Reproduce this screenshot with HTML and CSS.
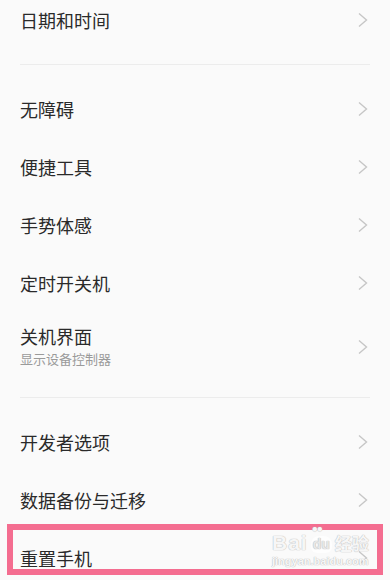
FILE: index.html
```html
<!DOCTYPE html>
<html lang="zh-CN">
<head>
<meta charset="utf-8">
<link rel="stylesheet" href="styles.css">
</head>
<body>
<div class="screen">
  <div class="list">
    <div class="row"><span class="title">日期和时间</span><svg class="chev" viewBox="0 0 10 16"><path d="M1 1.5 L8.5 8 L1 14.5"/></svg></div>
    <div class="divider"></div>
    <div class="row"><span class="title">无障碍</span><svg class="chev" viewBox="0 0 10 16"><path d="M1 1.5 L8.5 8 L1 14.5"/></svg></div>
    <div class="row"><span class="title">便捷工具</span><svg class="chev" viewBox="0 0 10 16"><path d="M1 1.5 L8.5 8 L1 14.5"/></svg></div>
    <div class="row"><span class="title">手势体感</span><svg class="chev" viewBox="0 0 10 16"><path d="M1 1.5 L8.5 8 L1 14.5"/></svg></div>
    <div class="row"><span class="title">定时开关机</span><svg class="chev" viewBox="0 0 10 16"><path d="M1 1.5 L8.5 8 L1 14.5"/></svg></div>
    <div class="row row-two">
      <div class="texts"><span class="title">关机界面</span><span class="sub">显示设备控制器</span></div>
      <svg class="chev" viewBox="0 0 10 16"><path d="M1 1.5 L8.5 8 L1 14.5"/></svg>
    </div>
    <div class="divider"></div>
    <div class="row"><span class="title">开发者选项</span><svg class="chev" viewBox="0 0 10 16"><path d="M1 1.5 L8.5 8 L1 14.5"/></svg></div>
    <div class="row"><span class="title">数据备份与迁移</span><svg class="chev" viewBox="0 0 10 16"><path d="M1 1.5 L8.5 8 L1 14.5"/></svg></div>
    <div class="row row-last"><span class="title">重置手机</span><svg class="chev" viewBox="0 0 10 16"><path d="M1 1.5 L8.5 8 L1 14.5"/></svg>
      <div class="highlight"></div>
      <div class="watermark">
        <div class="wm-top"><span class="wm-bai">Bai</span><span class="wm-paw"><span class="paw-dots">●●</span><span class="wm-du">du</span></span><span class="wm-jy">经验</span></div>
        <div class="wm-url">jingyan.baidu.com</div>
      </div>
    </div>
  </div>
</div>
</body>
</html>
```
FILE: styles.css
```css
html, body {
  margin: 0;
  padding: 0;
  background: #fafafa;
}
.screen {
  width: 390px;
  height: 580px;
  overflow: hidden;
  background: #fafafa;
  font-family: "Noto Sans CJK SC", "Noto Sans", sans-serif;
}
.list {
  margin-top: -9px;
  display: flex;
  flex-direction: column;
}
.row {
  height: 58px;
  display: flex;
  align-items: center;
  justify-content: space-between;
  padding: 0 22px 0 20px;
  box-sizing: border-box;
}
.row-two {
  height: 70px;
}
.texts {
  display: flex;
  flex-direction: column;
  gap: 3px;
  margin-top: -2px;
}
.title {
  font-size: 18px;
  line-height: 22px;
  color: #2a2a2a;
}
.sub {
  font-size: 13px;
  line-height: 18px;
  color: #9a9a9a;
}
.chev {
  width: 10px;
  height: 16px;
  fill: none;
  stroke: #c6c6c6;
  stroke-width: 1.4;
}
.divider {
  height: 1px;
  background: #ececec;
  margin: 15px 20px;
}
.row-last {
  position: relative;
}
.highlight {
  position: absolute;
  left: 7px;
  top: -5px;
  width: 376px;
  height: 51px;
  box-sizing: border-box;
  border: 6px solid #f46d90;
}
.watermark {
  position: absolute;
  left: 272px;
  top: 2px;
  color: rgba(255,255,255,0.9);
  text-shadow: 0 0 1px #bbb, 0 0 1px #bbb;
  font-family: "Liberation Sans", sans-serif;
}
.wm-top {
  display: flex;
  align-items: flex-end;
  height: 22px;
}
.wm-bai {
  font-size: 21px;
  font-weight: bold;
  line-height: 20px;
  letter-spacing: 1px;
}
.wm-paw {
  position: relative;
  display: inline-flex;
  align-items: flex-end;
  margin: 0 3px;
}
.paw-dots {
  position: absolute;
  top: -13px;
  left: 1px;
  font-size: 10px;
  letter-spacing: -1px;
}
.wm-du {
  font-size: 14px;
  font-weight: bold;
  line-height: 17px;
  background: rgba(255,255,255,0.7);
  border-radius: 8px 8px 6px 6px;
  padding: 0 2px;
  color: #e8e8e8;
}
.wm-jy {
  font-family: "Noto Sans CJK SC", sans-serif;
  font-size: 17px;
  line-height: 20px;
  font-weight: bold;
}
.wm-url {
  font-size: 11px;
  line-height: 12px;
  margin-top: 2px;
  font-weight: bold;
}
```
